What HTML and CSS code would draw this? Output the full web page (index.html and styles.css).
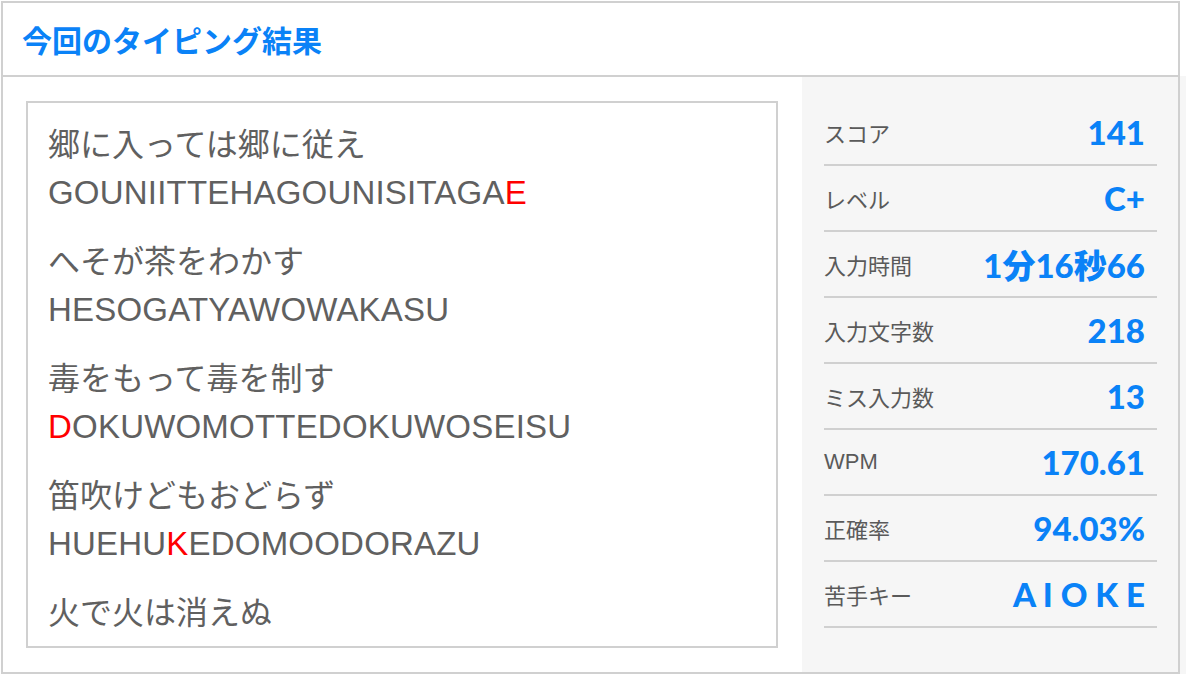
FILE: index.html
```html
<!DOCTYPE html>
<html lang="ja">
<head>
    <meta charset="UTF-8">
    <meta name="viewport" content="width=device-width, initial-scale=1.0">
    <title>タイピング結果</title>
    <link rel="stylesheet" href="styles.css">
</head>
<body>
    <div class="page">
        <div class="panel">
            <div class="panel-head">
                <h1>今回のタイピング結果</h1>
            </div>
            <div class="panel-body">
                <div class="history">
                    <div class="lines">
                        <p>郷に入っては郷に従え<br><span class="roma">GOUNIITTEHAGOUNISITAGA<span class="miss">E</span></span></p>
                        <p>へそが茶をわかす<br><span class="roma">HESOGATYAWOWAKASU</span></p>
                        <p>毒をもって毒を制す<br><span class="roma"><span class="miss">D</span>OKUWOMOTTEDOKUWOSEISU</span></p>
                        <p>笛吹けどもおどらず<br><span class="roma">HUEHU<span class="miss">K</span>EDOMOODORAZU</span></p>
                        <p>火で火は消えぬ</p>
                    </div>
                </div>
                <div class="stats">
                    <div class="stat"><span class="label">スコア</span><span class="value">141</span></div>
                    <div class="stat"><span class="label">レベル</span><span class="value">C+</span></div>
                    <div class="stat"><span class="label">入力時間</span><span class="value">1分16秒66</span></div>
                    <div class="stat"><span class="label">入力文字数</span><span class="value">218</span></div>
                    <div class="stat"><span class="label">ミス入力数</span><span class="value">13</span></div>
                    <div class="stat"><span class="label">WPM</span><span class="value">170.61</span></div>
                    <div class="stat"><span class="label">正確率</span><span class="value">94.03%</span></div>
                    <div class="stat"><span class="label">苦手キー</span><span class="value">A I O K E</span></div>
                </div>
            </div>
        </div>
        <div class="edge"></div>
    </div>
</body>
</html>
```

FILE: styles.css
```css
body {
    margin: 0;
    padding: 1px 0 0 1px;
    font-family: "Liberation Sans", "Noto Sans CJK JP", sans-serif;
    color: #606060;
    background: #fff;
}
.page {
    display: flex;
}
.panel {
    width: 1179px;
    flex-shrink: 0;
    box-sizing: border-box;
    border: 2px solid #d0d0d0;
}
.edge {
    flex: 1;
    margin-top: 75px;
    background: #f6f6f6;
}
.panel-head {
    height: 72px;
    display: flex;
    align-items: center;
    padding-left: 19px;
    border-bottom: 2px solid #d0d0d0;
}
h1 {
    margin: 0;
    font-family: "Noto Sans CJK JP", sans-serif;
    font-size: 30px;
    font-weight: 700;
    color: #0a82f7;
}
.panel-body {
    display: flex;
}
.history {
    width: 799px;
    box-sizing: border-box;
    padding: 24px 24px 24px 23px;
}
.lines {
    height: 547px;
    box-sizing: border-box;
    border: 2px solid #d0d0d0;
    padding: 18px 20px 0;
    overflow: hidden;
}
.lines p {
    margin: 0 0 21px;
    font-size: 32px;
    line-height: 48px;
    white-space: nowrap;
}
.roma {
    font-size: 33px;
    letter-spacing: 0.2px;
}
.miss {
    color: #ff0000;
}
.stats {
    flex: 1;
    background: #f6f6f6;
    padding: 23px 21px 0 22px;
}
.stat {
    height: 64px;
    display: flex;
    align-items: center;
    justify-content: space-between;
    border-bottom: 2px solid #d0d0d0;
}
.label {
    font-size: 22px;
    color: #5a5a5a;
}
.value {
    padding-right: 12px;
    font-family: Lato, "Noto Sans CJK JP", sans-serif;
    font-size: 33px;
    font-weight: 900;
    color: #0a82f7;
    white-space: pre;
}
```
